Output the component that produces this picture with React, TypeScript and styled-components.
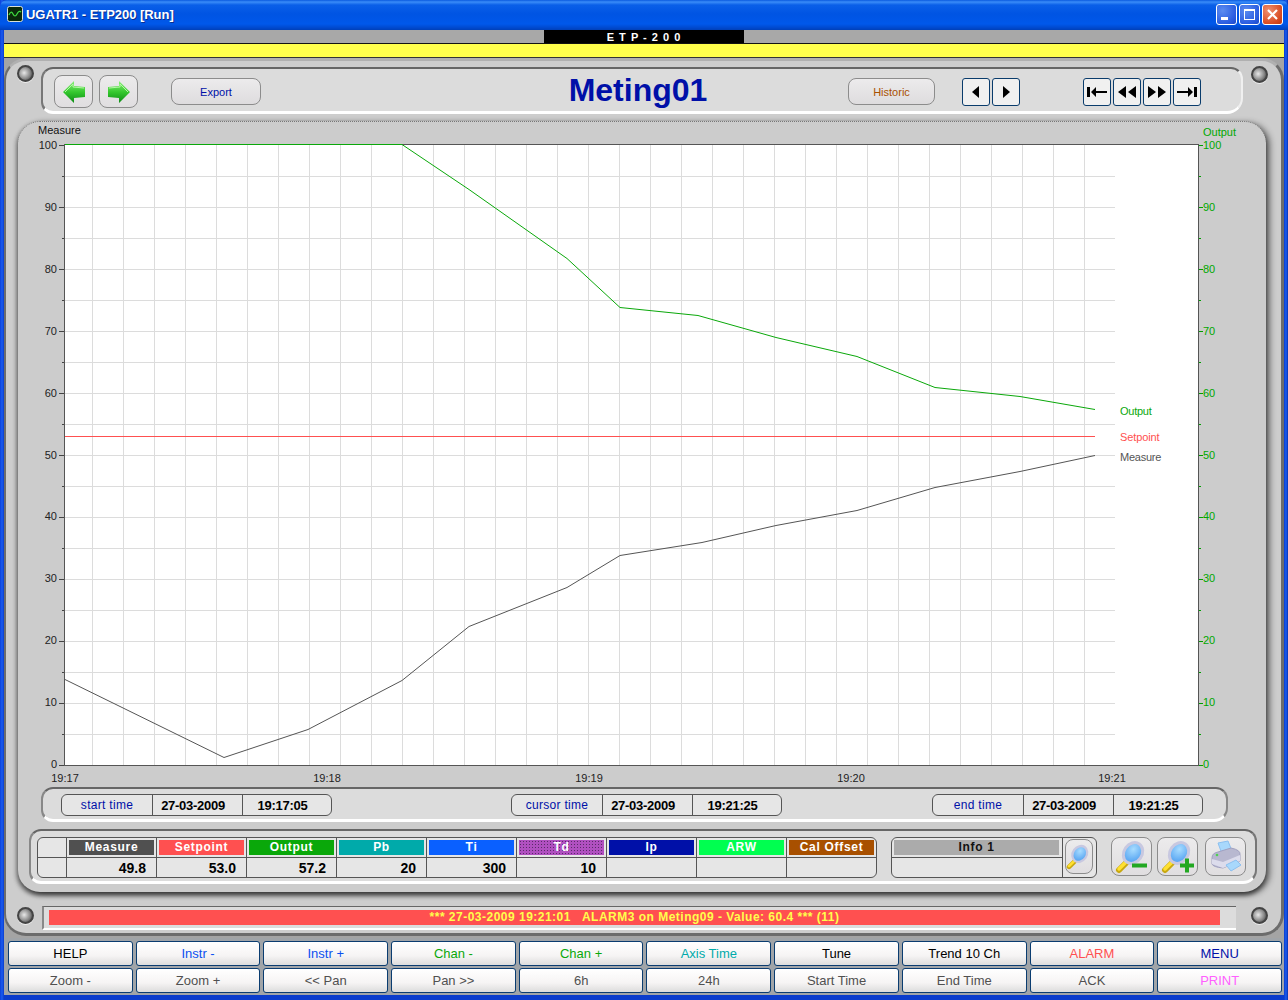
import React from "react";
import styled, { createGlobalStyle } from "styled-components";

const Global = createGlobalStyle`
  html, body { margin: 0; padding: 0; background: #0a3fd0; }
  * { box-sizing: border-box; }
  body { font-family: "Liberation Sans", Arial, sans-serif; }
`;

const Win = styled.div`
  position: relative;
  width: 1288px;
  height: 1000px;
  display: flex;
  flex-direction: column;
  padding: 0 4px 5px;
  overflow: hidden;
  background: linear-gradient(90deg, #0b3fd8 0, #1a5cf0 2px, #0a3ccc 4px, #0a3ccc 1284px, #1a5cf0 1286px, #0830b0 100%);
`;
const TitleBar = styled.div`
  height: 30px;
  margin: 0 -4px;
  padding: 0 5px 2px 7px;
  display: flex;
  align-items: center;
  gap: 3px;
  border-radius: 7px 7px 0 0;
  background: linear-gradient(180deg, #0a5adf 0, #3a8cf8 2px, #0a5fe8 5px, #0054e3 14px, #0058ea 24px, #0048cc 28px, #0040b8 100%);
`;
const TitleText = styled.span`
  flex: 1;
  color: #fff;
  font-size: 13px;
  font-weight: 700;
  letter-spacing: -0.04px;
  text-shadow: 1px 1px 0 #0a2f90;
`;
const Controls = styled.div`
  display: flex;
  gap: 2px;
`;
const WinButton = styled.div<{ $close?: boolean }>`
  width: 21px;
  height: 21px;
  border: 1px solid #fff;
  border-radius: 3px;
  display: flex;
  align-items: center;
  justify-content: center;
  background: ${(p) =>
    p.$close
      ? "radial-gradient(circle at 30% 30%, #f09070, #d84a20 70%, #c03810)"
      : "radial-gradient(circle at 30% 30%, #5c8cf0, #2a5ce0 70%, #1a48c8)"};
`;
const TopStrip = styled.div`
  height: 14px;
  background: #a8a8a8;
  display: flex;
  justify-content: center;
`;
const StripLabel = styled.div`
  width: 200px;
  height: 14px;
  background: #000;
  color: #fff;
  font-size: 11px;
  font-weight: 700;
  letter-spacing: 1px;
  line-height: 15px;
  text-align: center;
`;
const YellowBar = styled.div`
  height: 15px;
  margin-top: -1px;
  background: #ffff4c;
  border-top: 1px solid #111;
  border-bottom: 1px solid #333;
`;
const Backing = styled.div`
  height: 880px;
  background: #a4a4a4;
`;
const Frame = styled.div`
  position: relative;
  height: 878px;
  padding-top: 10px;
  display: flex;
  flex-direction: column;
  border-radius: 22px;
  border: 3px solid #6c6c6c;
  border-top-color: #b0b0b0;
  border-left-width: 2px;
  background: #cdcdcd;
`;
const Screw = styled.div<{ $x: number; $y: number }>`
  position: absolute;
  left: ${(p) => p.$x}px;
  top: ${(p) => p.$y}px;
  width: 17px;
  height: 17px;
  border-radius: 50%;
  border: 2px solid #444;
  background: radial-gradient(circle at 40% 45%, #e8e8e8, #8a8a8a 55%, #303030);
  box-shadow: 0 1px 0 #eee;
`;
const HeaderPanel = styled.div`
  height: 47px;
  margin: -4px 38px 0 35px;
  padding: 3px 40px 0 11px;
  display: flex;
  align-items: center;
  background: #dcdcdc;
  border-radius: 12px 12px 16px 12px;
  border-top: 2px solid #666;
  border-left: 2px solid #777;
  border-right: 2px solid #f0f0f0;
  border-bottom: 3px solid #fff;
`;
const IconButton = styled.button<{ $w: number; $h: number; $ml?: number }>`
  width: ${(p) => p.$w}px;
  height: ${(p) => p.$h}px;
  margin-left: ${(p) => p.$ml ?? 0}px;
  padding: 0;
  flex: none;
  display: flex;
  align-items: center;
  justify-content: center;
  border: 1px solid #8c8c8c;
  border-radius: 8px;
  background: linear-gradient(180deg, #ecebec, #e0dee0);
`;
const PillButton = styled.button<{ $w: number; $color: string; $ml?: number }>`
  width: ${(p) => p.$w}px;
  height: 27px;
  margin-left: ${(p) => p.$ml ?? 0}px;
  flex: none;
  padding: 0;
  border: 1px solid #8c8c8c;
  border-radius: 8px;
  background: linear-gradient(180deg, #ecebec, #dedcde);
  color: ${(p) => p.$color};
  font: 11px "Liberation Sans", Arial, sans-serif;
`;
const Title = styled.h1`
  flex: 1;
  margin: 0 0 3px;
  padding-left: 167px;
  text-align: center;
  font-size: 32px;
  line-height: 40px;
  font-weight: 700;
  color: #0010a8;
`;
const NavButton = styled.button<{ $ml?: number }>`
  width: 28px;
  height: 28px;
  margin-left: ${(p) => p.$ml ?? 2}px;
  padding: 0;
  flex: none;
  display: flex;
  align-items: center;
  justify-content: center;
  background: #f0f0f0;
  border: 1px solid #0a3c6c;
  border-radius: 3px;
`;
const ChartCard = styled.div`
  height: 771px;
  margin: 7px 15px 0 12px;
  display: flex;
  flex-direction: column;
  background: #cccccc;
  border-radius: 22px;
  border-top: 1px dotted #777;
  box-shadow: 0 3px 5px rgba(0, 0, 0, 0.5), 4px 2px 6px rgba(0, 0, 0, 0.45), -2px 3px 4px rgba(0, 0, 0, 0.2);
`;
const ChartSvg = styled.svg`
  display: block;
  flex: none;
  font-family: "Liberation Sans", Arial, sans-serif;
  font-size: 11px;
`;
const TimePanel = styled.div`
  height: 35px;
  margin: 0 38px 0 23px;
  padding: 5px 0 0 18px;
  display: flex;
  align-items: flex-start;
  background: #dcdcdc;
  border-radius: 12px 12px 14px 12px;
  border-top: 2px solid #666;
  border-left: 2px solid #888;
  border-bottom: 3px solid #fff;
  border-right: 2px solid #888;
`;
const Pill = styled.div<{ $ml?: number }>`
  width: 271px;
  height: 22px;
  margin-left: ${(p) => p.$ml ?? 0}px;
  display: grid;
  grid-template-columns: 90px 90px 1fr;
  border: 1px solid #555;
  border-radius: 6px;
  background: #e6e6e6;
`;
const PillCell = styled.div<{ $label?: boolean }>`
  display: flex;
  align-items: center;
  justify-content: center;
  padding-right: ${(p) => (p.$label ? 0 : 9)}px;
  font-size: ${(p) => (p.$label ? 12 : 13)}px;
  font-weight: ${(p) => (p.$label ? 400 : 700)};
  letter-spacing: ${(p) => (p.$label ? 0.3 : -0.28)}px;
  color: ${(p) => (p.$label ? "#0010a8" : "#000")};
  border-left: ${(p) => (p.$label ? "none" : "1px solid #555")};
`;
const TablePanel = styled.div`
  height: 55px;
  margin: 7px 9px 0 11px;
  padding: 6px 0 0 6px;
  display: flex;
  align-items: flex-start;
  background: #dcdcdc;
  border-radius: 12px 12px 14px 12px;
  border-top: 2px solid #666;
  border-left: 2px solid #888;
  border-bottom: 3px solid #fff;
  border-right: 2px solid #777;
`;
const DataTable = styled.div`
  width: 840px;
  height: 41px;
  display: grid;
  grid-template-columns: 28px repeat(9, 90px);
  grid-template-rows: 20px 20px;
  border: 1px solid #555;
  border-radius: 6px;
  background: #e6e6e6;
  flex: none;
`;
const HeadCell = styled.div<{ $first?: boolean }>`
  padding: 2px 2px 3px 2px;
  border-left: ${(p) => (p.$first ? "none" : "1px solid #555")};
  border-bottom: 1px solid #555;
`;
const Chip = styled.div<{ $bg: string; $dots?: boolean; $fg?: string }>`
  height: 15px;
  background-color: ${(p) => p.$bg};
  background-image: ${(p) => (p.$dots ? "radial-gradient(#5a2a6a 0.6px, transparent 0.8px)" : "none")};
  background-size: 3px 3px;
  color: ${(p) => p.$fg ?? "#fff"};
  font-size: 12px;
  font-weight: 700;
  line-height: 15px;
  letter-spacing: 0.7px;
  text-align: center;
`;
const ValueCell = styled.div<{ $first?: boolean }>`
  padding-right: 10px;
  border-left: ${(p) => (p.$first ? "none" : "1px solid #555")};
  font-size: 14px;
  font-weight: 700;
  line-height: 20px;
  text-align: right;
  color: #000;
`;
const InfoBox = styled.div`
  width: 206px;
  height: 41px;
  margin-left: 14px;
  flex: none;
  display: grid;
  grid-template-columns: 171px 1fr;
  grid-template-rows: 20px 20px;
  border: 1px solid #555;
  border-radius: 6px;
  background: #e6e6e6;
`;
const InfoHead = styled.div`
  padding: 2px 3px 3px 2px;
  border-bottom: 1px solid #555;
  border-right: 1px solid #555;
`;
const InfoValue = styled.div`
  border-right: 1px solid #555;
`;
const InfoAction = styled.div`
  grid-row: 1 / span 2;
  grid-column: 2;
  padding: 1px 0 0 2px;
`;
const AlarmPanel = styled.div`
  height: 24px;
  margin: 14px 45px 0 36px;
  padding: 3px 16px 0 5px;
  background: #dcdcdc;
  border-top: 1px solid #666;
  border-left: 2px solid #888;
  border-bottom: 2px solid #fff;
`;
const AlarmBar = styled.div`
  height: 15px;
  background: #ff5050;
  color: #ffff4c;
  font-size: 12px;
  font-weight: 700;
  line-height: 15px;
  letter-spacing: 0.49px;
  text-align: center;
  white-space: pre;
`;
const ButtonGrid = styled.div`
  flex: 1;
  padding: 3px 2px 2px 4px;
  display: grid;
  grid-template-columns: repeat(10, 1fr);
  grid-template-rows: 25px 25px;
  column-gap: 3px;
  row-gap: 2px;
  background: #a0a4a8;
`;
const KeyButton = styled.button<{ $color: string }>`
  padding: 0;
  border: 1px solid #0a3c70;
  border-radius: 3px;
  background: linear-gradient(180deg, #ffffff 0, #f6f4f4 60%, #dcdcdc 100%);
  color: ${(p) => p.$color};
  font: 13px "Liberation Sans", Arial, sans-serif;
`;

const y = (v: number) => 145 + (100 - v) * 6.2;
const labelY = (v: number) => 145 + (100 - v) * 6.19 + 4;
const pts = (a: number[][]) => a.map((p) => p.join(",")).join(" ");
const vGrid = Array.from({ length: 33 }, (_, i) => 92.5 + 31 * i);
const hGrid = Array.from({ length: 19 }, (_, i) => 176 + 31 * i);
const major = [100, 90, 80, 70, 60, 50, 40, 30, 20, 10, 0];
const minor = [95, 85, 75, 65, 55, 45, 35, 25, 15, 5];
const times: [string, number][] = [["19:17", 65], ["19:18", 327], ["19:19", 589], ["19:20", 851], ["19:21", 1112]];
const measure = [[65, 679.5], [224, 757.5], [308, 729.5], [402, 680.5], [469, 626.5], [567, 587.5], [620, 555.5], [702, 542.5], [776, 525.5], [857, 510.5], [935, 487.5], [1020, 471.5], [1095, 455.5]];
const output = [[65, 144.5], [402, 144.5], [469, 189.5], [567, 258.5], [620, 307.5], [698, 315.5], [776, 337.5], [857, 356.5], [935, 387.5], [1020, 396.5], [1095, 409.5]];

const Chart = () => (
  <ChartSvg width={1248} height={665} viewBox="18 122 1248 665">
    <rect x={64.5} y={144.5} width={1134} height={621} fill="#fff" />
    {vGrid.map((x) => <line key={x} x1={x} x2={x} y1={145} y2={765} stroke="#dcdcdc" />)}
    {hGrid.map((v) => <line key={v} x1={65} x2={1115} y1={v + 0.5} y2={v + 0.5} stroke="#dcdcdc" />)}
    <rect x={64.5} y={144.5} width={1134} height={621} fill="none" stroke="#555" />
    {major.map((v) => (
      <g key={v}>
        <line x1={59} x2={64} y1={Math.round(y(v)) + 0.5} y2={Math.round(y(v)) + 0.5} stroke="#444" />
        <text x={57} y={labelY(v)} textAnchor="end" fill="#222">{v}</text>
        <line x1={1199} x2={1203} y1={Math.round(y(v)) + 0.5} y2={Math.round(y(v)) + 0.5} stroke="#00a000" />
        <text x={1203} y={labelY(v)} fill="#00a800">{v}</text>
      </g>
    ))}
    {minor.map((v) => (
      <g key={v}>
        <line x1={62} x2={64} y1={Math.round(y(v)) + 0.5} y2={Math.round(y(v)) + 0.5} stroke="#444" />
        <line x1={1199} x2={1201} y1={Math.round(y(v)) + 0.5} y2={Math.round(y(v)) + 0.5} stroke="#00a000" />
      </g>
    ))}
    <text x={38} y={134} fill="#111">Measure</text>
    <text x={1203} y={136} fill="#00a800">Output</text>
    {times.map(([t, x]) => <text key={t} x={x} y={782} textAnchor="middle" fill="#222">{t}</text>)}
    <polyline points={pts(measure)} fill="none" stroke="#555" />
    <rect x={65} y={436} width={1030} height={1} fill="#ff5050" />
    <polyline points={pts(output)} fill="none" stroke="#0aa80a" />
    <text x={1120} y={415} fill="#0aa80a" letterSpacing={-0.25}>Output</text>
    <text x={1120} y={441} fill="#ff5050" letterSpacing={-0.1}>Setpoint</text>
    <text x={1120} y={461} fill="#555" letterSpacing={-0.25}>Measure</text>
  </ChartSvg>
);

const GreenArrow = ({ flip }: { flip?: boolean }) => (
  <svg width="24" height="24" viewBox="0 0 24 24" style={flip ? { transform: "scaleX(-1)" } : undefined}>
    <defs>
      <linearGradient id={flip ? "ga2" : "ga1"} x1="0" y1="0" x2="0" y2="1">
        <stop offset="0" stopColor="#8af07a" />
        <stop offset="0.5" stopColor="#35c82e" />
        <stop offset="1" stopColor="#0c8c14" />
      </linearGradient>
    </defs>
    <path d="M1 12 L12 1 L12 6 L23 7 L23 17 L12 18 L12 23 Z" fill={`url(#${flip ? "ga2" : "ga1"})`} />
    <path d="M3 12 L11 4 L11 7 L22 8" fill="none" stroke="#b4f8a4" strokeWidth="1" />
  </svg>
);
const Glass = ({ size, sign }: { size: number; sign?: "-" | "+" }) => (
  <svg width={size} height={size} viewBox="0 0 34 34">
    <defs>
      <radialGradient id="lens" cx="0.4" cy="0.35" r="0.8">
        <stop offset="0" stopColor="#a8dcff" />
        <stop offset="1" stopColor="#3e94ee" />
      </radialGradient>
    </defs>
    <path d="M4 30 L11 23" stroke="#c8a810" strokeWidth="6" strokeLinecap="round" />
    <path d="M4 29 L10 23" stroke="#ffe030" strokeWidth="3.5" strokeLinecap="round" />
    <ellipse cx="18" cy="13" rx="9" ry="11" transform="rotate(35 18 13)" fill="url(#lens)" stroke="#c8c8e0" strokeWidth="3" />
    {sign && <rect x={sign === "+" ? 19 : 17} y={23.5} width={sign === "+" ? 14 : 15} height={4} fill="#22a822" />}
    {sign === "+" && <rect x={24} y={18.5} width={4} height={14} fill="#22a822" />}
  </svg>
);
const Printer = () => (
  <svg width="34" height="34" viewBox="0 0 34 34">
    <path d="M9 3 L19 1 L23 11 L13 14 Z" fill="#a8d8fc" stroke="#8cc0f0" />
    <path d="M3 18 Q3 13 9 12 L22 8 Q32 10 31 15 L31 21 L14 28 Q4 27 3 24 Z" fill="#b8b8d0" stroke="#a0a0c0" />
    <path d="M3 19 L14 22 L31 15 L31 21 L14 28 L3 24 Z" fill="#dcdcec" />
    <path d="M17 25 L27 20 L32 25 L22 31 Z" fill="#a8d8fc" stroke="#8cc0f0" />
    <circle cx="8" cy="15" r="1.3" fill="#50d050" />
  </svg>
);
const NavIcon = ({ d }: { d: string }) => (
  <svg width="24" height="16" viewBox="0 0 24 16"><path d={d} fill="#000" /></svg>
);

const headers = [
  { t: "Measure", bg: "#505050" },
  { t: "Setpoint", bg: "#ff5050" },
  { t: "Output", bg: "#0aa80a" },
  { t: "Pb", bg: "#00aaaa" },
  { t: "Ti", bg: "#0a60ff" },
  { t: "Td", bg: "#b050c0", dots: true },
  { t: "Ip", bg: "#0010a8" },
  { t: "ARW", bg: "#00ff50" },
  { t: "Cal Offset", bg: "#a85000" },
];
const values = ["49.8", "53.0", "57.2", "20", "300", "10", "", "", ""];
const keys: [string, string][] = [
  ["HELP", "#000"], ["Instr -", "#0a50f0"], ["Instr +", "#0a50f0"], ["Chan -", "#0aa80a"], ["Chan +", "#0aa80a"],
  ["Axis Time", "#00aaaa"], ["Tune", "#000"], ["Trend 10 Ch", "#000"], ["ALARM", "#ff5050"], ["MENU", "#0010a8"],
  ["Zoom -", "#505050"], ["Zoom +", "#505050"], ["<< Pan", "#505050"], ["Pan >>", "#505050"], ["6h", "#505050"],
  ["24h", "#505050"], ["Start Time", "#505050"], ["End Time", "#505050"], ["ACK", "#505050"], ["PRINT", "#ff60ff"],
];

const TimePill = ({ label, date, time, ml }: { label: string; date: string; time: string; ml?: number }) => (
  <Pill $ml={ml}>
    <PillCell $label>{label}</PillCell>
    <PillCell>{date}</PillCell>
    <PillCell>{time}</PillCell>
  </Pill>
);

export default function App() {
  return (
    <Win>
      <Global />
      <TitleBar>
        <svg width="16" height="16" viewBox="0 0 16 16">
          <rect x="0.5" y="0.5" width="15" height="15" rx="2" fill="#0a2a0a" stroke="#d8e0d8" />
          <path d="M2 9 Q4 4 6 8 T10 8 T14 6" fill="none" stroke="#40e040" strokeWidth="1.2" />
        </svg>
        <TitleText>UGATR1 - ETP200 [Run]</TitleText>
        <Controls>
          <WinButton>
            <svg width="13" height="13" viewBox="0 0 13 13"><rect x="1" y="9" width="7" height="3" fill="#fff" /></svg>
          </WinButton>
          <WinButton>
            <svg width="13" height="13" viewBox="0 0 13 13"><rect x="1.5" y="1.5" width="10" height="10" fill="none" stroke="#fff" /><rect x="1" y="1" width="11" height="2" fill="#fff" /></svg>
          </WinButton>
          <WinButton $close>
            <svg width="13" height="13" viewBox="0 0 13 13"><path d="M2 2 L11 11 M11 2 L2 11" stroke="#fff" strokeWidth="2.2" /></svg>
          </WinButton>
        </Controls>
      </TitleBar>
      <TopStrip><StripLabel>E T P - 2 0 0</StripLabel></TopStrip>
      <YellowBar />
      <Backing>
        <Frame>
          <Screw $x={11} $y={4} />
          <Screw $x={1245} $y={5} />
          <Screw $x={11} $y={846} />
          <Screw $x={1245} $y={846} />
          <HeaderPanel>
            <IconButton $w={39} $h={33}><GreenArrow /></IconButton>
            <IconButton $w={39} $h={33} $ml={6}><GreenArrow flip /></IconButton>
            <PillButton $w={90} $color="#0010a8" $ml={33}>Export</PillButton>
            <Title>Meting01</Title>
            <PillButton $w={87} $color="#a85000">Historic</PillButton>
            <NavButton $ml={27}><NavIcon d="M8 8 L15 2 L15 14 Z" /></NavButton>
            <NavButton><NavIcon d="M9 2 L16 8 L9 14 Z" /></NavButton>
            <NavButton $ml={63}><NavIcon d="M2 3 H5 V13 H2 Z M6 8 L11 3 V7 H22 V9 H11 V13 Z" /></NavButton>
            <NavButton><NavIcon d="M3 8 L11 2 V14 Z M13 8 L21 2 V14 Z" /></NavButton>
            <NavButton><NavIcon d="M3 2 L11 8 L3 14 Z M13 2 L21 8 L13 14 Z" /></NavButton>
            <NavButton><NavIcon d="M22 3 H19 V13 H22 Z M18 8 L13 3 V7 H2 V9 H13 V13 Z" /></NavButton>
          </HeaderPanel>
          <ChartCard>
            <Chart />
            <TimePanel>
              <TimePill label="start time" date="27-03-2009" time="19:17:05" />
              <TimePill label="cursor time" date="27-03-2009" time="19:21:25" ml={179} />
              <TimePill label="end time" date="27-03-2009" time="19:21:25" ml={150} />
            </TimePanel>
            <TablePanel>
              <DataTable>
                <HeadCell $first />
                {headers.map((h) => (
                  <HeadCell key={h.t}><Chip $bg={h.bg} $dots={h.dots}>{h.t}</Chip></HeadCell>
                ))}
                <ValueCell $first />
                {values.map((v, i) => <ValueCell key={i}>{v}</ValueCell>)}
              </DataTable>
              <InfoBox>
                <InfoHead><Chip $bg="#ababab" $fg="#111">Info 1</Chip></InfoHead>
                <InfoAction>
                  <IconButton $w={28} $h={35}><Glass size={26} /></IconButton>
                </InfoAction>
                <InfoValue />
              </InfoBox>
              <IconButton $w={41} $h={39} $ml={14}><Glass size={34} sign="-" /></IconButton>
              <IconButton $w={41} $h={39} $ml={5}><Glass size={34} sign="+" /></IconButton>
              <IconButton $w={41} $h={39} $ml={7}><Printer /></IconButton>
            </TablePanel>
          </ChartCard>
          <AlarmPanel>
            <AlarmBar>{"*** 27-03-2009 19:21:01   ALARM3 on Meting09 - Value: 60.4 *** (11)"}</AlarmBar>
          </AlarmPanel>
        </Frame>
      </Backing>
      <ButtonGrid>
        {keys.map(([t, c]) => <KeyButton key={t} $color={c}>{t}</KeyButton>)}
      </ButtonGrid>
    </Win>
  );
}
